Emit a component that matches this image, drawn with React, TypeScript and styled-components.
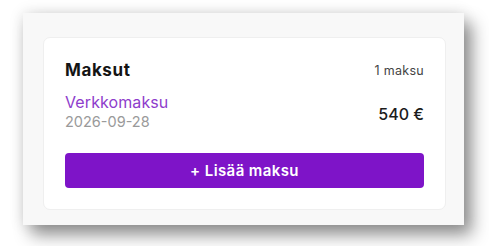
import React from 'react'
import styled, { createGlobalStyle } from 'styled-components'

const GlobalStyle = createGlobalStyle`
	html, body {
		margin: 0;
		padding: 0;
		background: #ffffff;
	}
	body {
		font-family: Inter, 'Noto Sans', sans-serif;
	}
`

const Page = styled('div')`
	padding: 13px 0 0 23px;
	width: 489px;
	height: 246px;
	box-sizing: border-box;
`

const Panel = styled('div')`
	width: 441px;
	height: 212px;
	box-sizing: border-box;
	background: #f8f8f8;
	padding: 24px 18px 15px 20px;
	box-shadow: 8px 10px 16px rgba(0, 0, 0, 0.42), 0 0 14px rgba(0, 0, 0, 0.12);
`

const Card = styled('section')`
	height: 100%;
	box-sizing: border-box;
	background: #ffffff;
	border: 1px solid #efefef;
	border-radius: 7px;
	padding: 20px 21px 0 21px;
	display: flex;
	flex-direction: column;
`

const Header = styled('div')`
	display: flex;
	justify-content: space-between;
	align-items: center;
	height: 24px;
`

const Title = styled('h2')`
	margin: 0;
	font-size: 17px;
	font-weight: 700;
	color: #141414;
	letter-spacing: 0.6px;
`

const Count = styled('span')`
	font-size: 12.5px;
	color: #444;
	letter-spacing: 0.3px;
`

const PaymentRow = styled('div')`
	display: flex;
	justify-content: space-between;
	align-items: center;
	margin-top: 10px;
`

const PaymentInfo = styled('div')`
	display: flex;
	flex-direction: column;
`

const Method = styled('span')`
	font-size: 16px;
	line-height: 20px;
	color: #8e3ccc;
	letter-spacing: 0.1px;
`

const DateText = styled('span')`
	font-size: 14.5px;
	line-height: 19px;
	color: #9a9a9a;
`

const Amount = styled('span')`
	font-size: 16px;
	font-weight: 500;
	color: #1c1c1c;
	margin-top: 4px;
`

const AddButton = styled('button')`
	margin-top: 22px;
	height: 35px;
	width: 100%;
	border: none;
	border-radius: 4px;
	background: #7e14c8;
	color: #ffffff;
	font-family: inherit;
	font-size: 15px;
	font-weight: 600;
	letter-spacing: 0.4px;
	cursor: pointer;
`

export default function App() {
	return (
		<Page>
			<GlobalStyle />
			<Panel>
				<Card>
					<Header>
						<Title>Maksut</Title>
						<Count>1 maksu</Count>
					</Header>
					<PaymentRow>
						<PaymentInfo>
							<Method>Verkkomaksu</Method>
							<DateText>2026-09-28</DateText>
						</PaymentInfo>
						<Amount>540 €</Amount>
					</PaymentRow>
					<AddButton>+ Lisää maksu</AddButton>
				</Card>
			</Panel>
		</Page>
	)
}
